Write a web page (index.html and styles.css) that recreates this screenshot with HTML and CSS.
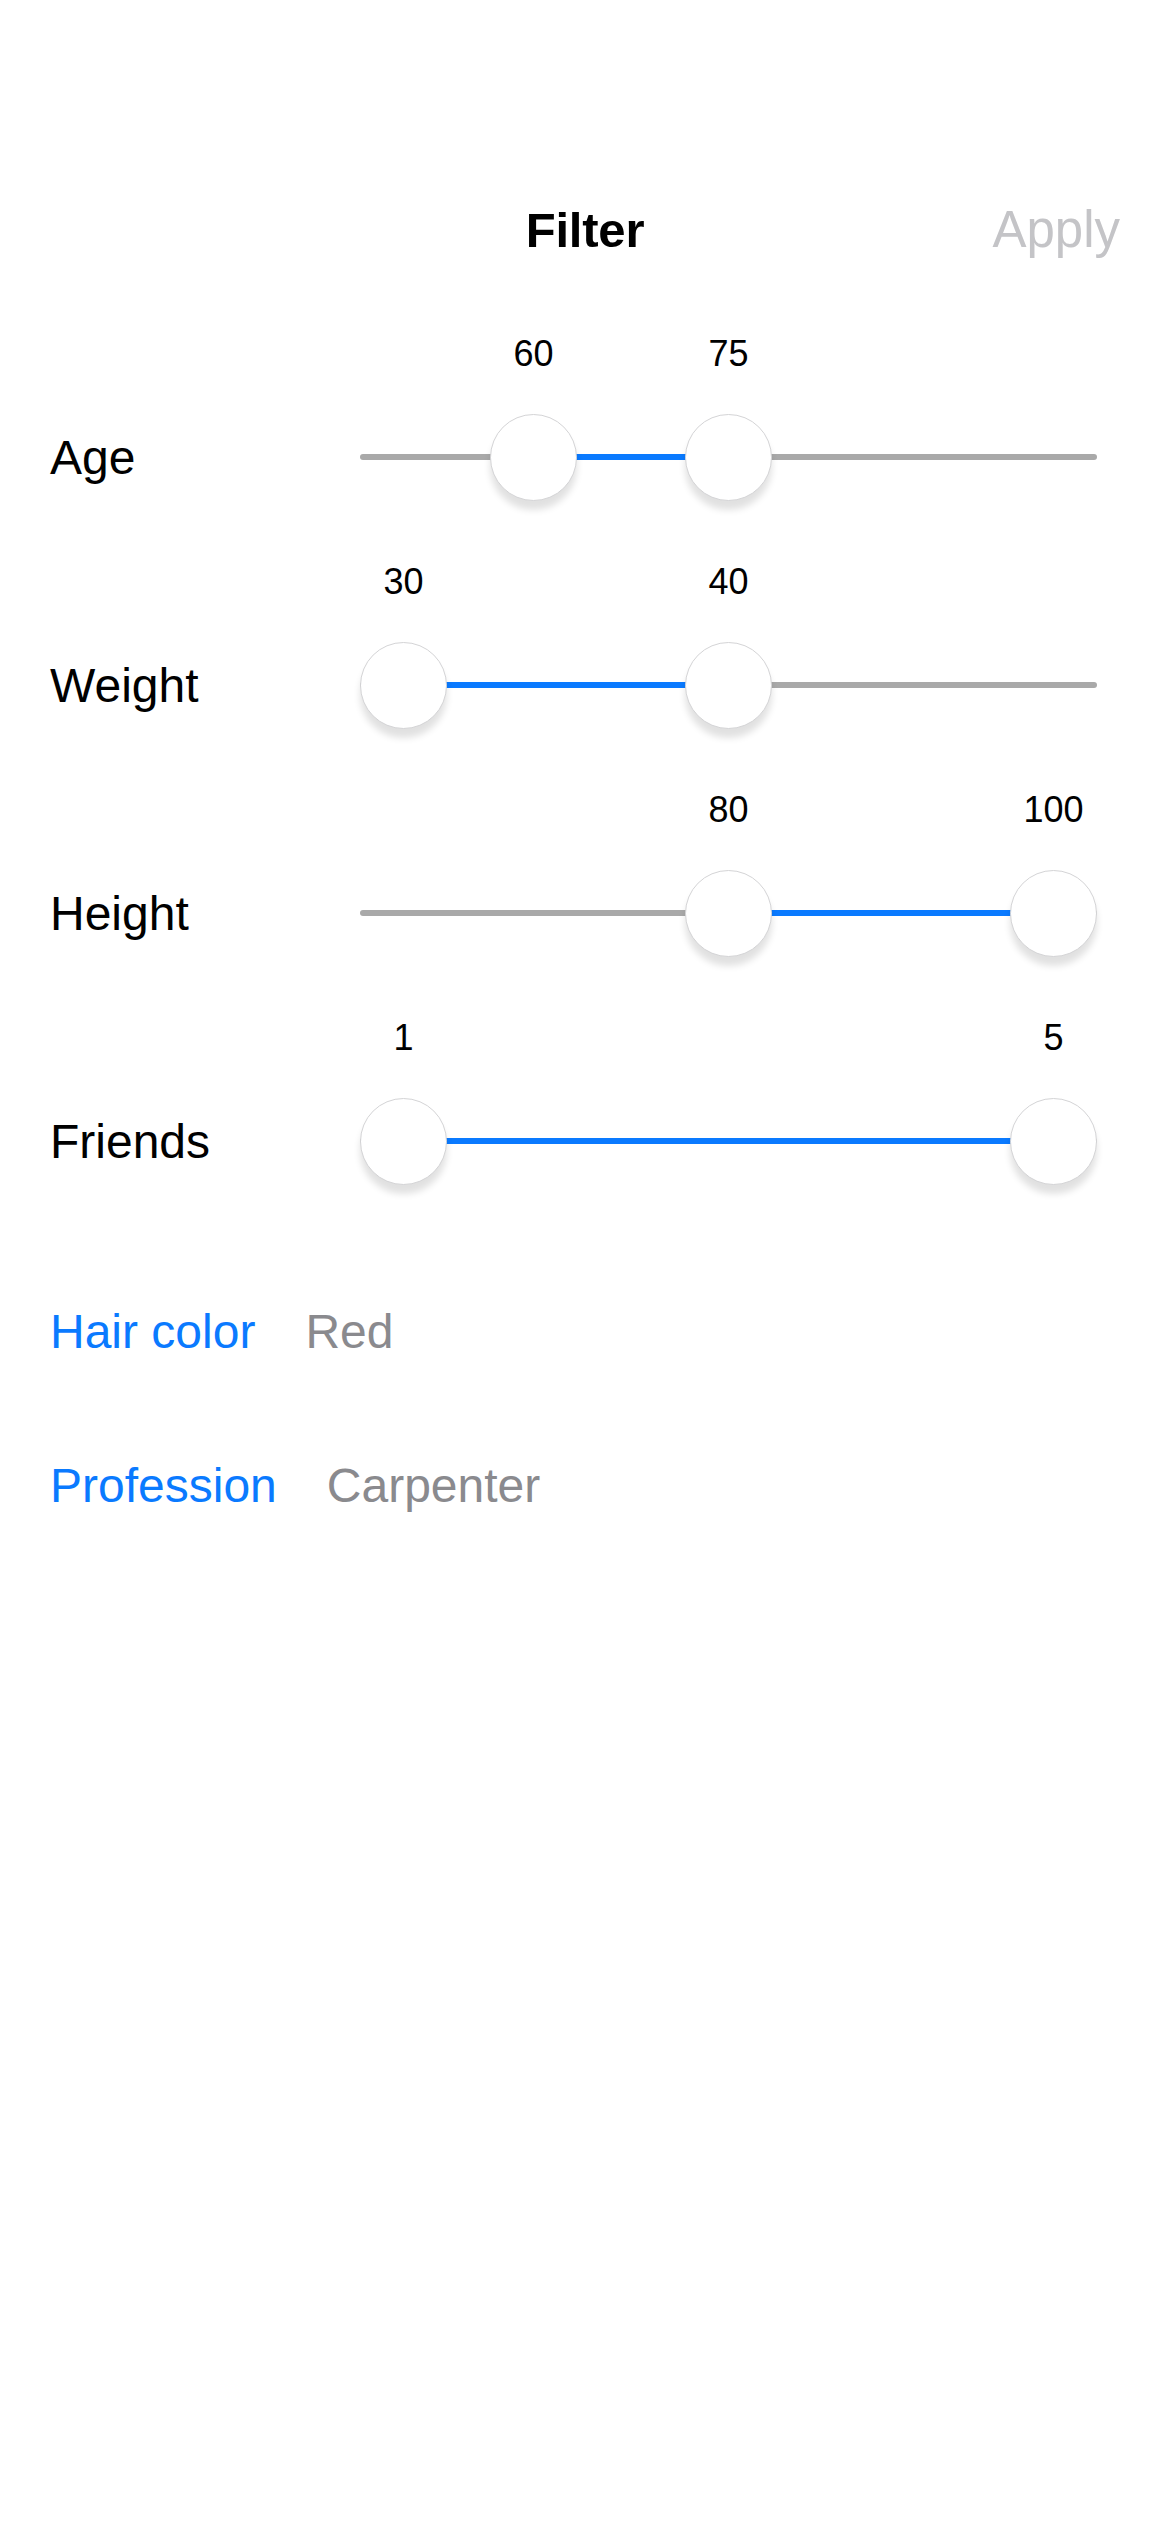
FILE: index.html
```html
<!DOCTYPE html>
<html lang="en">
<head>
<meta charset="utf-8">
<title>Filter</title>
<link rel="stylesheet" href="styles.css">
</head>
<body>
<div class="screen">
  <header class="nav">
    <span></span>
    <h1 class="nav-title">Filter</h1>
    <button class="nav-apply">Apply</button>
  </header>

  <section class="sliders">
    <div class="row">
      <div class="row-label">Age</div>
      <div class="slider" style="--a:0.2;--b:0.5">
        <div class="values">
          <span class="value v-a">60</span>
          <span class="value v-b">75</span>
        </div>
        <div class="track-area">
          <div class="track"></div>
          <div class="fill"></div>
          <div class="thumb t-a"></div>
          <div class="thumb t-b"></div>
        </div>
      </div>
    </div>

    <div class="row">
      <div class="row-label">Weight</div>
      <div class="slider" style="--a:0;--b:0.5">
        <div class="values">
          <span class="value v-a">30</span>
          <span class="value v-b">40</span>
        </div>
        <div class="track-area">
          <div class="track"></div>
          <div class="fill"></div>
          <div class="thumb t-a"></div>
          <div class="thumb t-b"></div>
        </div>
      </div>
    </div>

    <div class="row">
      <div class="row-label">Height</div>
      <div class="slider" style="--a:0.5;--b:1">
        <div class="values">
          <span class="value v-a">80</span>
          <span class="value v-b">100</span>
        </div>
        <div class="track-area">
          <div class="track"></div>
          <div class="fill"></div>
          <div class="thumb t-a"></div>
          <div class="thumb t-b"></div>
        </div>
      </div>
    </div>

    <div class="row">
      <div class="row-label">Friends</div>
      <div class="slider" style="--a:0;--b:1">
        <div class="values">
          <span class="value v-a">1</span>
          <span class="value v-b">5</span>
        </div>
        <div class="track-area">
          <div class="track"></div>
          <div class="fill"></div>
          <div class="thumb t-a"></div>
          <div class="thumb t-b"></div>
        </div>
      </div>
    </div>
  </section>

  <section class="pickers">
    <div class="picker">
      <span class="picker-label">Hair color</span>
      <span class="picker-value">Red</span>
    </div>
    <div class="picker">
      <span class="picker-label">Profession</span>
      <span class="picker-value">Carpenter</span>
    </div>
  </section>
</div>
</body>
</html>
```

FILE: styles.css
```css
* {
  box-sizing: border-box;
}

html, body {
  margin: 0;
  padding: 0;
  background: #ffffff;
}

body {
  font-family: "Liberation Sans", Arial, sans-serif;
  color: #000000;
}

.screen {
  width: 1170px;
  height: 2532px;
  padding-top: 169px;
  overflow: hidden;
}

/* Navigation bar */
.nav {
  height: 121px;
  display: grid;
  grid-template-columns: 1fr auto 1fr;
  align-items: center;
  padding: 0 50px 0 50px;
}

.nav-title {
  margin: 0;
  font-size: 49px;
  font-weight: 700;
  letter-spacing: -0.2px;
}

.nav-apply {
  justify-self: end;
  border: none;
  background: none;
  padding: 0;
  font-family: inherit;
  font-size: 51px;
  color: #c4c4c7;
}

/* Slider rows */
.row {
  height: 228px;
  display: grid;
  grid-template-columns: 310px 1fr;
  padding: 0 73px 0 50px;
}

.row-label {
  margin-top: 123px;
  height: 88px;
  display: flex;
  align-items: center;
  font-size: 48px;
}

.slider {
  display: flex;
  flex-direction: column;
  --thumb: 87px;
}

.values {
  position: relative;
  height: 123px;
}

.value {
  position: absolute;
  top: 46px;
  font-size: 36px;
  line-height: 36px;
  transform: translateX(-50%);
  white-space: nowrap;
}

.v-a {
  left: calc(var(--thumb) / 2 + var(--a) * (100% - var(--thumb)));
}

.v-b {
  left: calc(var(--thumb) / 2 + var(--b) * (100% - var(--thumb)));
}

.track-area {
  position: relative;
  height: 88px;
  display: flex;
  align-items: center;
}

.track {
  width: 100%;
  height: 6px;
  border-radius: 3px;
  background: #a9a9a9;
}

.fill {
  position: absolute;
  top: 41px;
  height: 6px;
  background: #0a7aff;
  left: calc(var(--thumb) / 2 + var(--a) * (100% - var(--thumb)));
  width: calc((var(--b) - var(--a)) * (100% - var(--thumb)));
}

.thumb {
  position: absolute;
  top: 0.5px;
  width: 87px;
  height: 87px;
  margin-left: -43.5px;
  border-radius: 50%;
  background: #ffffff;
  border: 1.5px solid #d4d4d6;
  box-shadow: 0 9px 7px rgba(0, 0, 0, 0.12);
}

.t-a {
  left: calc(var(--thumb) / 2 + var(--a) * (100% - var(--thumb)));
}

.t-b {
  left: calc(var(--thumb) / 2 + var(--b) * (100% - var(--thumb)));
}

/* Pickers */
.pickers {
  padding: 100px 0 0 50px;
  display: flex;
  flex-direction: column;
  gap: 94px;
}

.picker {
  display: flex;
  gap: 50px;
  font-size: 48px;
  line-height: 60px;
}

.picker-label {
  color: #0a7aff;
}

.picker-value {
  color: #8a8a8e;
}
```
